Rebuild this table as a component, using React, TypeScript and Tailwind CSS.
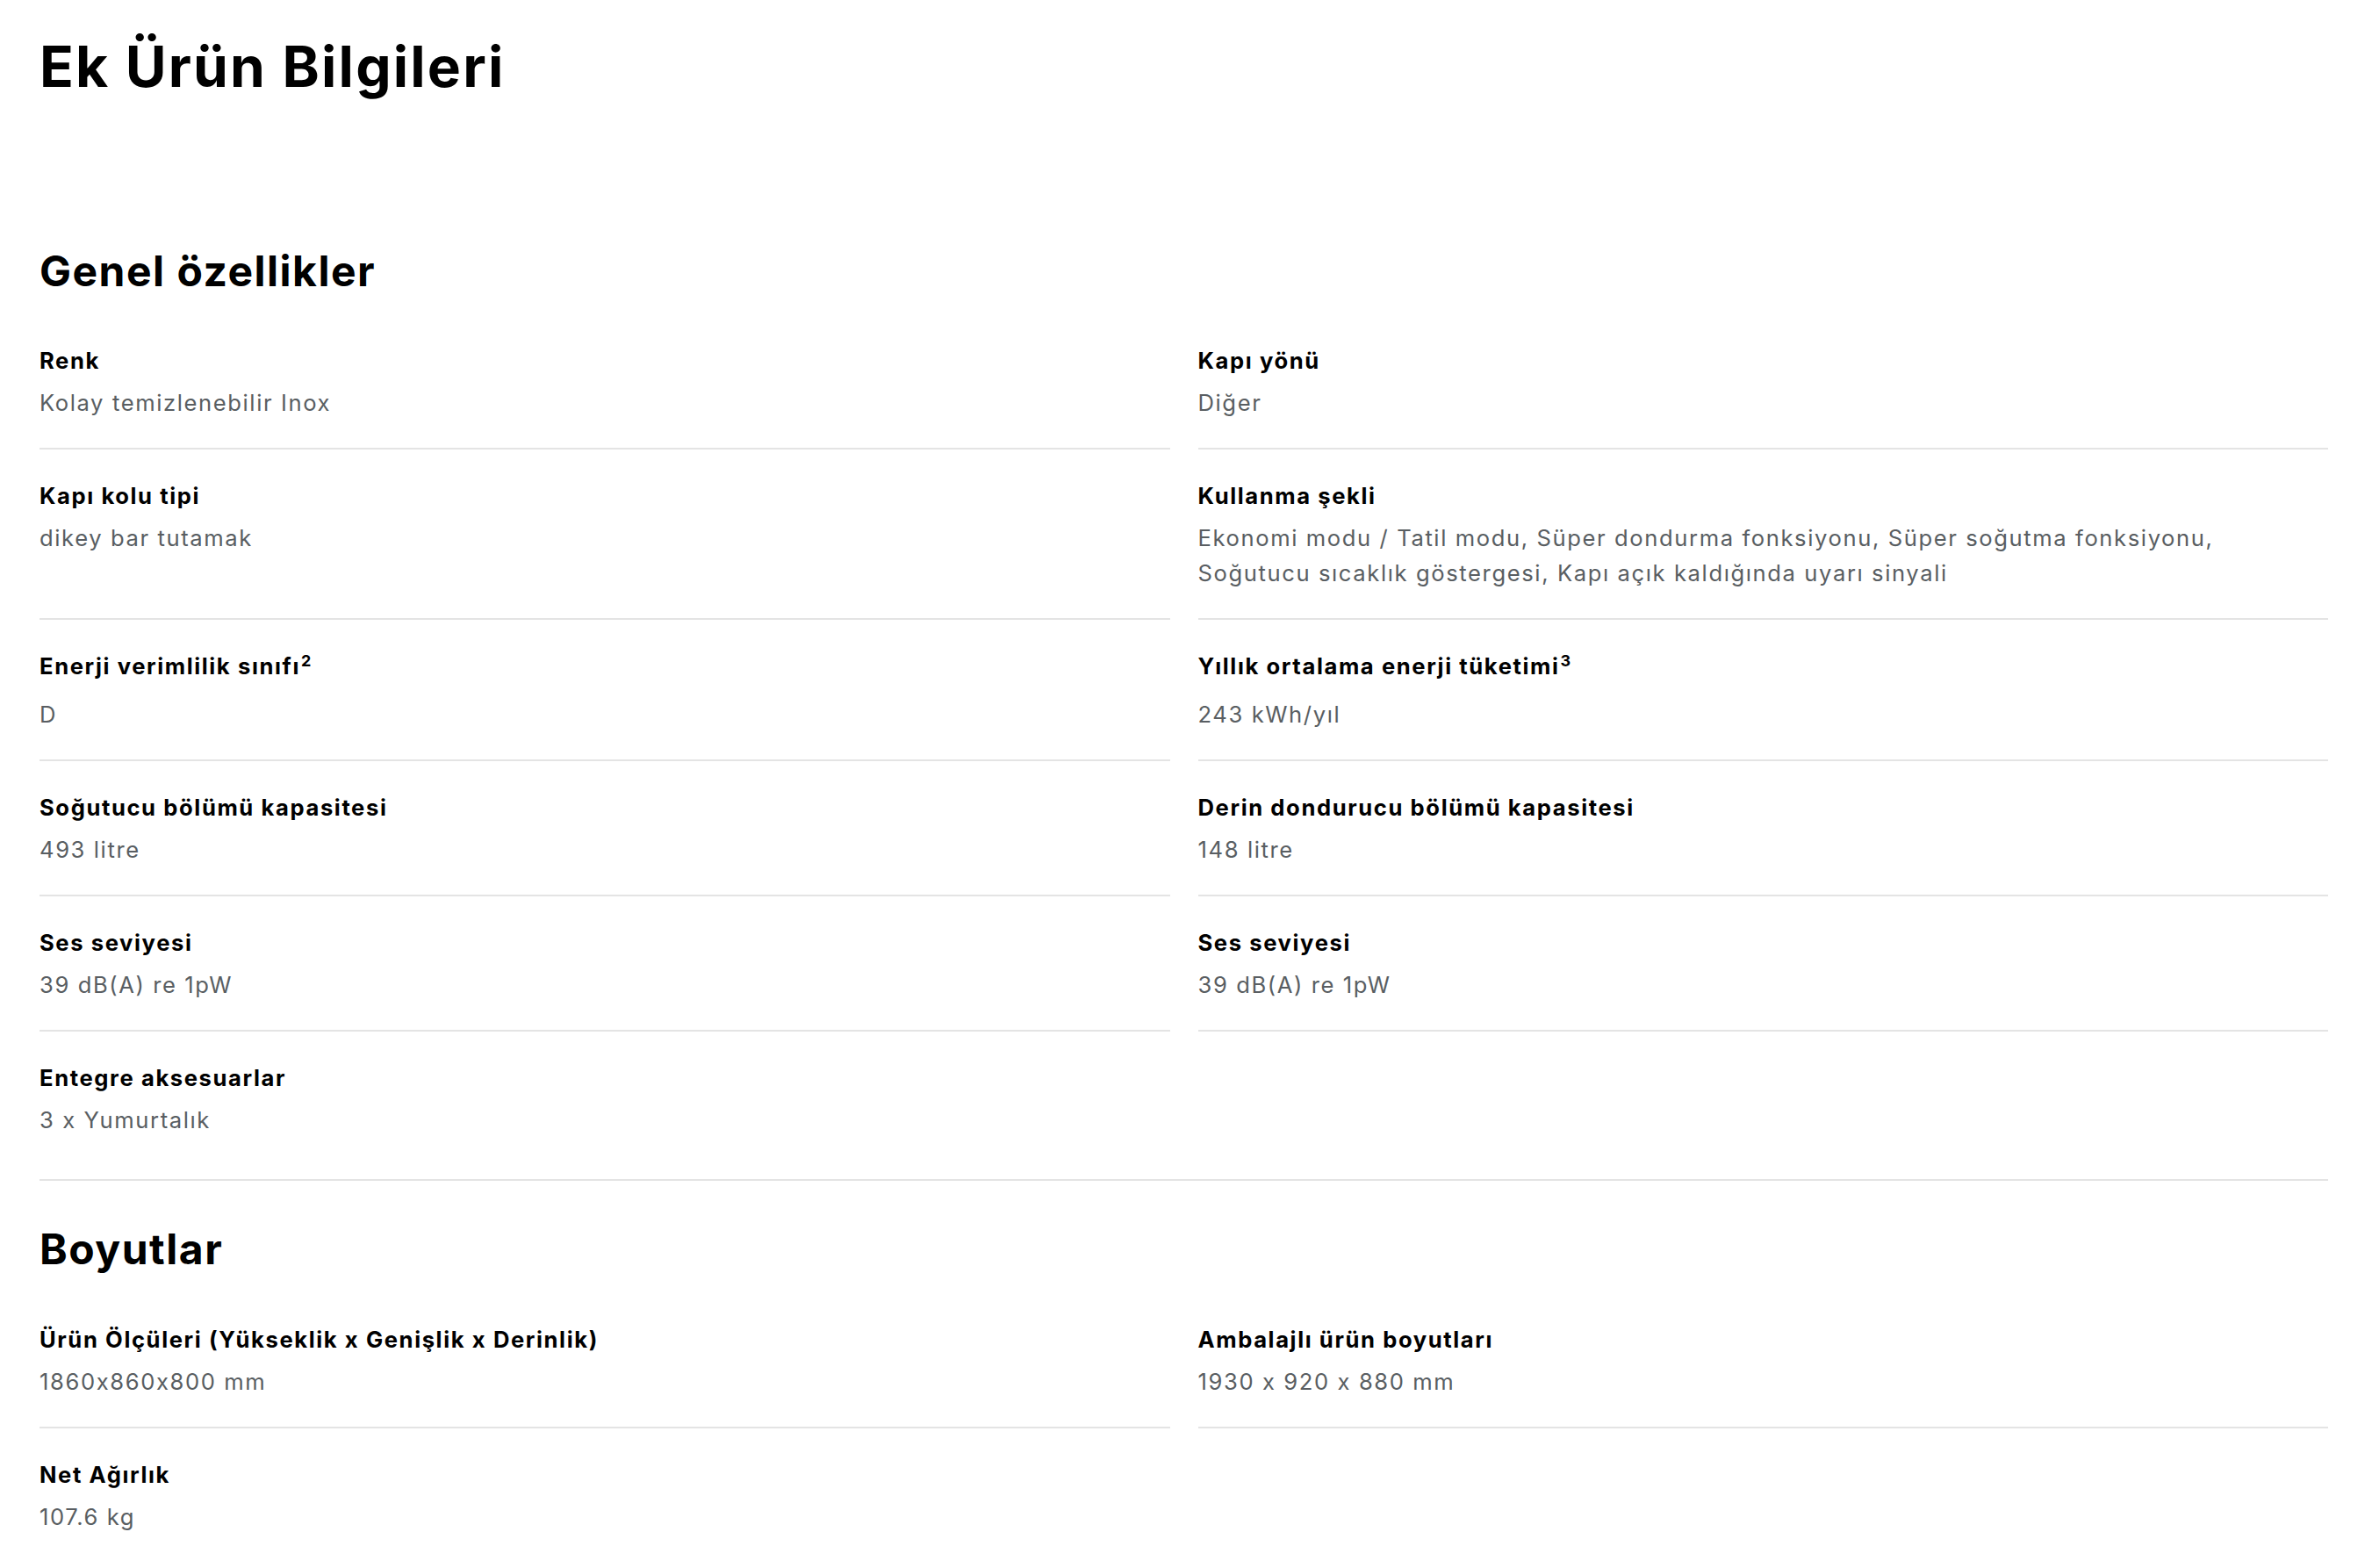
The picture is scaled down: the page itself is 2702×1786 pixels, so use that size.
import React, { ReactNode } from 'react';

interface Spec {
  label: string;
  sup?: string;
  value: ReactNode;
}

interface Section {
  title: string;
  specs: Spec[];
}

const SECTIONS: Section[] = [
  {
    title: 'Genel özellikler',
    specs: [
      { label: 'Renk', value: 'Kolay temizlenebilir Inox' },
      { label: 'Kapı yönü', value: 'Diğer' },
      { label: 'Kapı kolu tipi', value: 'dikey bar tutamak' },
      {
        label: 'Kullanma şekli',
        value: (
          <>
            Ekonomi modu / Tatil modu, Süper dondurma fonksiyonu, Süper soğutma fonksiyonu,
            <br />
            Soğutucu sıcaklık göstergesi, Kapı açık kaldığında uyarı sinyali
          </>
        ),
      },
      { label: 'Enerji verimlilik sınıfı', sup: '2', value: 'D' },
      { label: 'Yıllık ortalama enerji tüketimi', sup: '3', value: '243 kWh/yıl' },
      { label: 'Soğutucu bölümü kapasitesi', value: '493 litre' },
      { label: 'Derin dondurucu bölümü kapasitesi', value: '148 litre' },
      { label: 'Ses seviyesi', value: '39 dB(A) re 1pW' },
      { label: 'Ses seviyesi', value: '39 dB(A) re 1pW' },
      { label: 'Entegre aksesuarlar', value: '3 x Yumurtalık' },
    ],
  },
  {
    title: 'Boyutlar',
    specs: [
      { label: 'Ürün Ölçüleri (Yükseklik x Genişlik x Derinlik)', value: '1860x860x800 mm' },
      { label: 'Ambalajlı ürün boyutları', value: '1930 x 920 x 880 mm' },
      { label: 'Net Ağırlık', value: '107.6 kg' },
    ],
  },
];

function SpecCell({ spec, last }: { spec: Spec; last: boolean }) {
  return (
    <div
      className={
        last
          ? 'pt-[33px] pb-[47px]'
          : 'pt-[33px] pb-[31px] border-b-2 border-[#e4e4e4]'
      }
    >
      <div
        className={
          spec.sup
            ? 'text-[25.6px] leading-[40px] tracking-[1.6px] font-bold text-black pb-[7px]'
            : 'text-[25.6px] leading-[40px] tracking-[1.6px] font-bold text-black'
        }
      >
        {spec.label}
        {spec.sup && <sup className="text-[18px] ml-[1px]">{spec.sup}</sup>}
      </div>
      <div className="mt-[8px] text-[25.6px] leading-[40px] tracking-[1.6px] text-[#595e62]">
        {spec.value}
      </div>
    </div>
  );
}

function SpecSection({ section, first }: { section: Section; first: boolean }) {
  const cols = 2;
  // cells of the last row carry no divider; the section border closes it
  const lastRowStart = Math.floor((section.specs.length - 1) / cols) * cols;
  return (
    <section
      className={
        first
          ? 'mt-[165px] border-b-2 border-[#e4e4e4]'
          : 'pt-[49px]'
      }
    >
      <h2 className="text-[48px] leading-[1.2] tracking-[1.5px] font-bold text-black mb-[21px]">
        {section.title}
      </h2>
      <div className="grid grid-cols-2 gap-x-[32px]">
        {section.specs.map((spec, i) => (
          <SpecCell key={i} spec={spec} last={i >= lastRowStart} />
        ))}
      </div>
    </section>
  );
}

export default function App() {
  return (
    <div
      className="min-h-screen bg-white pt-[38px] pl-[45px] pr-[50px] [font-feature-settings:'calt'_0]"
      style={{ fontFamily: 'Inter, "Noto Sans", sans-serif' }}
    >
      <h1 className="text-[64px] leading-[1.2] tracking-[2.2px] font-bold text-black">
        Ek Ürün Bilgileri
      </h1>
      {SECTIONS.map((s, i) => (
        <SpecSection key={s.title} section={s} first={i === 0} />
      ))}
    </div>
  );
}
